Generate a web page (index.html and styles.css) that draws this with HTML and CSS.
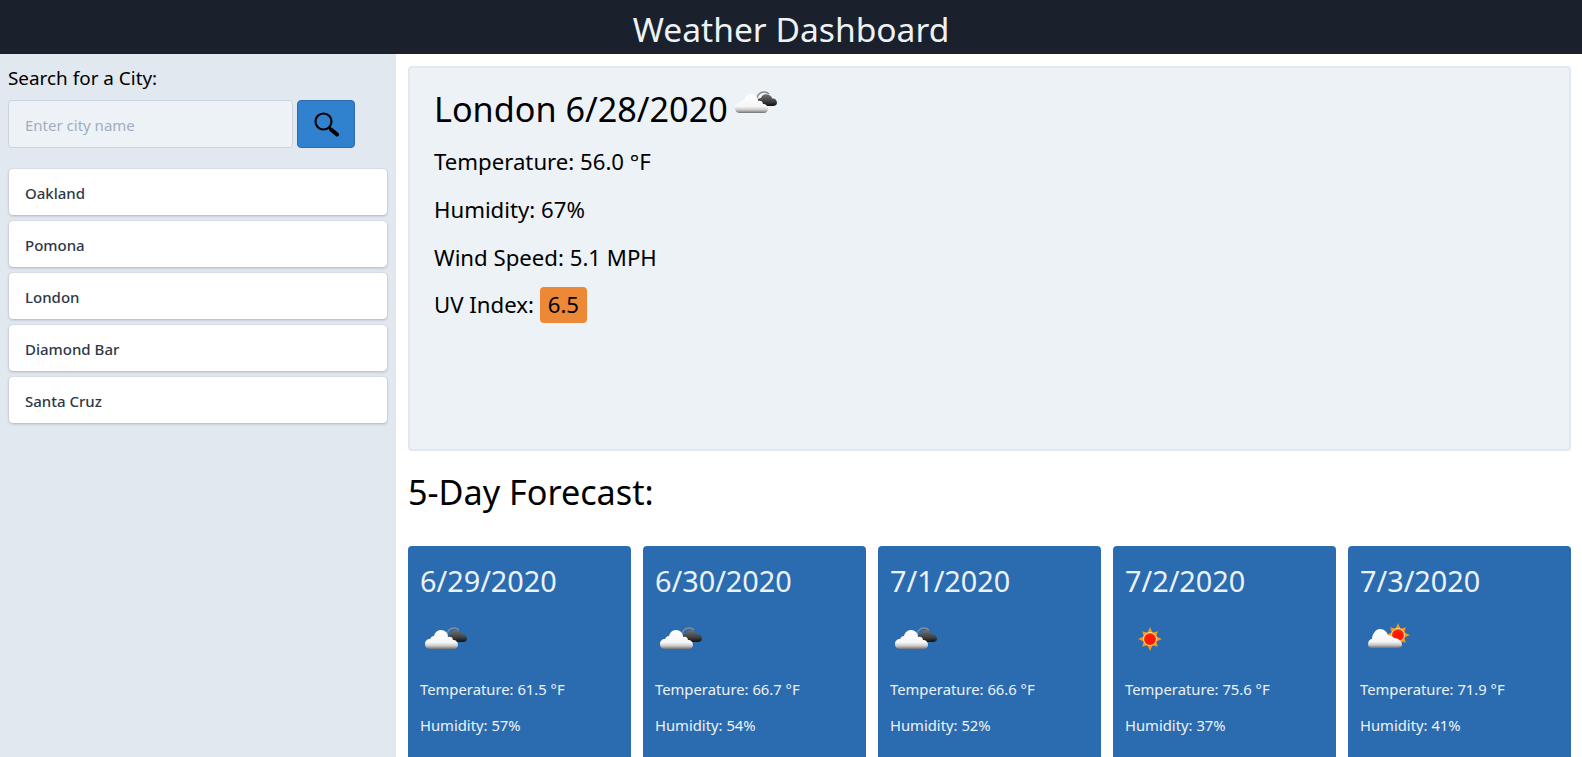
FILE: index.html
```html
<!DOCTYPE html>
<html>
<head>
    <title>Weather Dashboard</title>
    <link rel="stylesheet" href="styles.css">
</head>
<body>
    <svg class="icon-defs" width="0" height="0">
        <defs>
            <linearGradient id="cloudWhite" x1="0" y1="0" x2="0" y2="1">
                <stop offset="0" stop-color="#ffffff"/>
                <stop offset="0.66" stop-color="#f6f6f6"/>
                <stop offset="0.84" stop-color="#c8c8c8"/>
                <stop offset="1" stop-color="#707070"/>
            </linearGradient>
            <linearGradient id="cloudDark" x1="0" y1="0" x2="0" y2="1">
                <stop offset="0" stop-color="#707070"/>
                <stop offset="0.6" stop-color="#404040"/>
                <stop offset="1" stop-color="#111111"/>
            </linearGradient>
            <radialGradient id="sunCore" cx="0.5" cy="0.58" r="0.6">
                <stop offset="0" stop-color="#ff1500"/>
                <stop offset="0.7" stop-color="#fb1f00"/>
                <stop offset="1" stop-color="#ffa000"/>
            </radialGradient>
            <g id="sun">
                <path fill="#f59a12" d="M25 13L27.500 18.700 32.800 17.200 31.300 22.500 37 25 31.300 27.500 32.800 32.800 27.500 31.300 25 37 22.500 31.300 17.200 32.800 18.700 27.500 13 25 18.700 22.500 17.200 17.200 22.500 18.700Z"/>
                <circle cx="25" cy="25" r="6.500" fill="url(#sunCore)" stroke="#ffdca8" stroke-width="1"/>
            </g>
            <symbol id="icon-cloud" viewBox="0 0 50 50">
                <path fill="none" stroke="#8a8a8a" stroke-width="1.500" d="M27 21C27 17 30 14 34 14 36 14 38 15 39 16"/>
                <path fill="url(#cloudDark)" d="M30 28C27 28 26 26 27 24 27 21 29 20 31 20 32 16.500 36 15.500 39 17 41 18 42 19 42 20.500 45 20 47 22 47 25 47 27 45 28 43 28Z"/>
                <path fill="url(#cloudWhite)" d="M10 35C6 35 5 32 5 30 5 27 7 25 10 25 11 23 12 22 14 22 15 18 18 16 21 16 25 16 28 19 28 23 30 22 33 23 33 26 36 26 38 28 38 31 38 33 36 35 34 35Z"/>
            </symbol>
            <symbol id="icon-sun" viewBox="0 0 50 50">
                <use href="#sun"/>
            </symbol>
            <symbol id="icon-cloud-sun" viewBox="0 0 50 50">
                <use href="#sun" transform="translate(13 -4)"/>
                <path fill="url(#cloudWhite)" d="M12 34C9 34 8 32 8 30 8 27 10 25 12 25 12 20 16 15 20 15 24 15 27 18 28 21 31 21 33 23 34 24 38 24 42 27 42 30 42 33 40 34 38 34Z"/>
            </symbol>
        </defs>
    </svg>

    <header class="topbar">
        <h1>Weather Dashboard</h1>
    </header>

    <div class="layout">
        <aside class="sidebar">
            <label class="search-label" for="cityInput">Search for a City:</label>
            <form class="search-form">
                <input type="text" id="cityInput" placeholder="Enter city name">
                <button type="button" class="search-btn" aria-label="Search">
                    <svg width="26" height="26" viewBox="0 0 26 26">
                        <circle cx="10.500" cy="10.500" r="8" fill="none" stroke="#000" stroke-width="2.200"/>
                        <path d="M16.500 16.500l2 2" stroke="#000" stroke-width="2" fill="none"/>
                        <path d="M18 18.500l6 5" stroke="#000" stroke-width="4" stroke-linecap="round" fill="none"/>
                    </svg>
                </button>
            </form>
            <ul class="city-list">
                <li>Oakland</li>
                <li>Pomona</li>
                <li>London</li>
                <li>Diamond Bar</li>
                <li>Santa Cruz</li>
            </ul>
        </aside>

        <main class="content">
            <section class="current">
                <h2 class="current-title">London 6/28/2020<svg class="current-icon"><use href="#icon-cloud"/></svg></h2>
                <p>Temperature: 56.0 °F</p>
                <p>Humidity: 67%</p>
                <p>Wind Speed: 5.1 MPH</p>
                <p class="uv-row">UV Index: <span class="uv-badge">6.5</span></p>
            </section>

            <h2 class="forecast-title">5-Day Forecast:</h2>

            <div class="forecast">
                <div class="day-card">
                    <h3>6/29/2020</h3>
                    <svg class="day-icon"><use href="#icon-cloud"/></svg>
                    <p>Temperature: 61.5 °F</p>
                    <p>Humidity: 57%</p>
                </div>
                <div class="day-card">
                    <h3>6/30/2020</h3>
                    <svg class="day-icon"><use href="#icon-cloud"/></svg>
                    <p>Temperature: 66.7 °F</p>
                    <p>Humidity: 54%</p>
                </div>
                <div class="day-card">
                    <h3>7/1/2020</h3>
                    <svg class="day-icon"><use href="#icon-cloud"/></svg>
                    <p>Temperature: 66.6 °F</p>
                    <p>Humidity: 52%</p>
                </div>
                <div class="day-card">
                    <h3>7/2/2020</h3>
                    <svg class="day-icon"><use href="#icon-sun"/></svg>
                    <p>Temperature: 75.6 °F</p>
                    <p>Humidity: 37%</p>
                </div>
                <div class="day-card">
                    <h3>7/3/2020</h3>
                    <svg class="day-icon"><use href="#icon-cloud-sun"/></svg>
                    <p>Temperature: 71.9 °F</p>
                    <p>Humidity: 41%</p>
                </div>
            </div>
        </main>
    </div>
</body>
</html>
```

FILE: styles.css
```css
* { box-sizing: border-box; }

html, body { height: 100%; }

body {
    margin: 0;
    overflow: hidden;
    font-family: "Noto Sans", "Open Sans", sans-serif;
    color: #000;
    background: #fff;
}

h1, h2, h3, p, ul { margin: 0; padding: 0; font-weight: 400; }

.icon-defs { position: absolute; }

.topbar {
    height: 54px;
    background: #1a202c;
    color: #edf2f7;
    text-align: center;
}
.topbar h1 { font-size: 33.6px; line-height: 58px; }

.layout { display: flex; height: 703px; }

.sidebar {
    flex: 0 0 396px;
    padding: 12px 8px;
    background: #e2e8f0;
}
.search-label { display: block; font-size: 18.9px; line-height: 24px; }

.search-form { display: flex; gap: 4px; margin-top: 10px; }
.search-form input {
    width: 285px;
    height: 48px;
    padding: 2px 16px 0;
    font: inherit;
    font-size: 15px;
    background: #edf2f7;
    border: 1px solid #cbd5e0;
    border-radius: 4px;
}
.search-form input::placeholder { color: #a0aec0; opacity: 1; }

.search-btn {
    display: flex;
    align-items: center;
    justify-content: center;
    width: 58px;
    height: 48px;
    padding: 0;
    background: #3182ce;
    border: 1px solid #2b6cb0;
    border-radius: 4px;
}

.city-list { margin-top: 21px; list-style: none; }
.city-list li {
    height: 46px;
    margin: 0 1px 6px;
    padding-left: 16px;
    font-size: 15px;
    font-weight: 500;
    line-height: 48px;
    color: #2d3748;
    background: #fff;
    border-radius: 4px;
    box-shadow: 0 1px 3px rgba(0, 0, 0, 0.2), 0 0 1px rgba(0, 0, 0, 0.2);
}

.content { flex: 1; padding: 12px 11px 0 12px; min-width: 0; }

.current {
    height: 385px;
    padding: 17px 24px;
    background: #edf2f7;
    border: 2px solid #e2e8f0;
    border-radius: 4px;
}
.current-title { display: flex; align-items: center; font-size: 34.2px; line-height: 48px; }
.current-icon { width: 50px; height: 50px; margin: -12px 0 0 2px; }
.current p { margin-top: 15px; font-size: 22.2px; line-height: 33px; }
.current-title + p { margin-top: 12px; }
.current p.uv-row { margin-top: 13px; line-height: 36px; }
.uv-badge {
    display: inline-block;
    padding: 0 8px;
    background: #ed8936;
    border-radius: 4px;
}

.forecast-title { margin: 17px 0 0; font-size: 34.2px; line-height: 48px; }

.forecast { display: flex; gap: 12px; margin-top: 30px; }
.day-card {
    flex: 1;
    height: 320px;
    padding: 12px;
    color: #edf2f7;
    background: #2b6cb0;
    border-radius: 4px;
}
.day-card h3 { font-size: 28.8px; line-height: 46px; }
.day-icon { display: block; width: 50px; height: 50px; margin-top: 10px; }
.day-card p { font-size: 14.8px; line-height: 36px; }
.day-icon + p { margin-top: 7px; }
```
